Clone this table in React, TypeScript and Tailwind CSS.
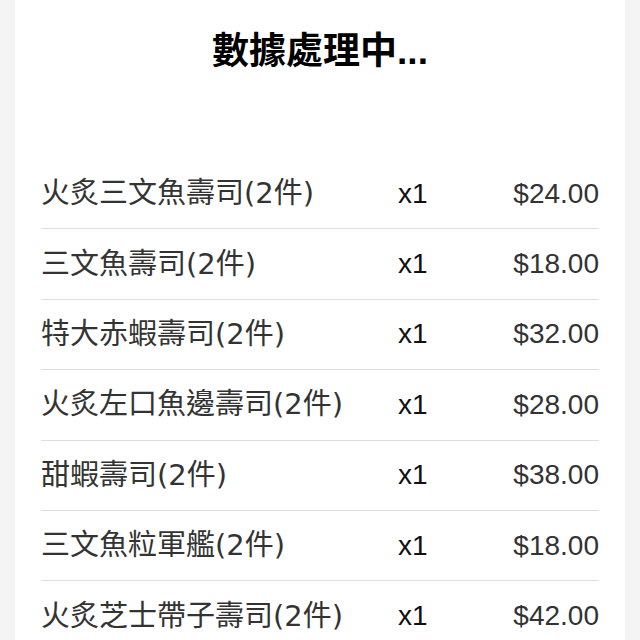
const items = [
  { name: "火炙三文魚壽司(2件)", qty: 1, price: 24 },
  { name: "三文魚壽司(2件)", qty: 1, price: 18 },
  { name: "特大赤蝦壽司(2件)", qty: 1, price: 32 },
  { name: "火炙左口魚邊壽司(2件)", qty: 1, price: 28 },
  { name: "甜蝦壽司(2件)", qty: 1, price: 38 },
  { name: "三文魚粒軍艦(2件)", qty: 1, price: 18 },
  { name: "火炙芝士帶子壽司(2件)", qty: 1, price: 42 },
];

export default function App() {
  return (
    <div className="h-screen overflow-hidden bg-[#f4f4f4] px-[15px] font-['Liberation_Sans','Noto_Sans_CJK_TC',sans-serif]">
      <div className="h-full bg-white px-[26px] pt-[30px]">
        <h1 className="text-center text-[37px] font-bold leading-[44px] text-black">數據處理中...</h1>
        <ul className="mt-[85px]">
          {items.map((item) => (
            <li
              key={item.name}
              className="flex h-[70.4px] items-center border-b-[1.5px] border-[#dedede] text-[28px] leading-none"
            >
              <span className="w-[357px] shrink-0 text-[29px] text-[#333] font-['DejaVu_Sans','Noto_Sans_CJK_TC',sans-serif]">
                {item.name}
              </span>
              <span className="text-[#111]">x{item.qty}</span>
              <span className="flex-1 text-right text-[#333]">${item.price.toFixed(2)}</span>
            </li>
          ))}
        </ul>
      </div>
    </div>
  );
}
